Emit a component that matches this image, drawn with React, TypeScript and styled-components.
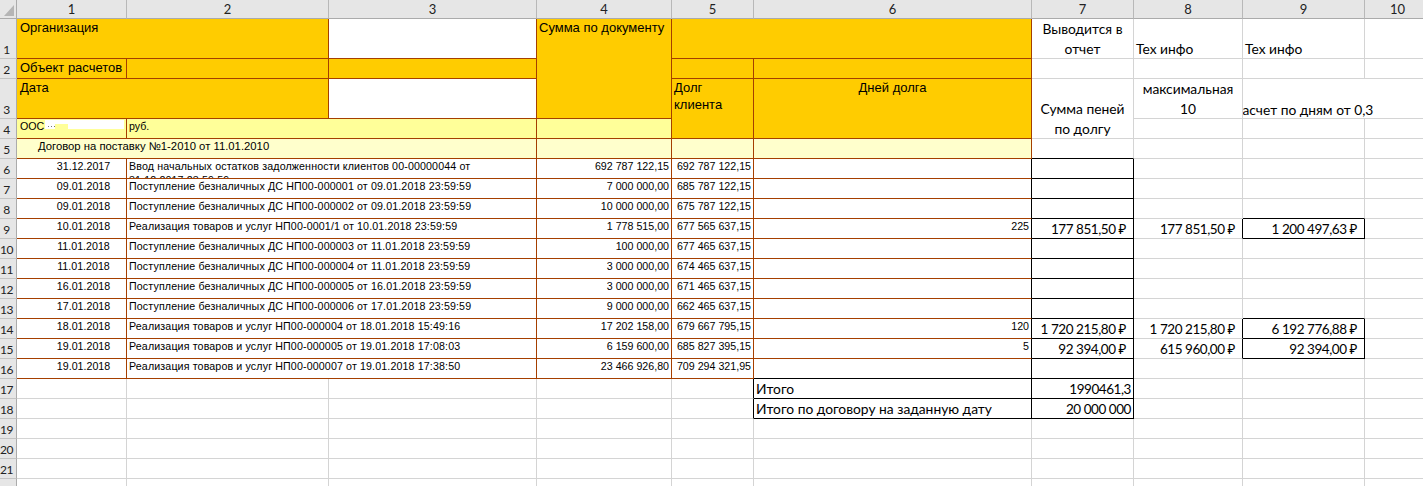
import React from 'react';
import styled, { createGlobalStyle } from 'styled-components';

const BROWN = '#a53f00';
const BLACK = '#000000';
const GRID = '#d4d4d4';
const ORANGE = '#ffcc00';
const YELLOW = '#ffff99';
const PALE = '#ffffcc';

const COLS = [110, 202, 208, 135, 82, 278, 102, 109, 122, 66];
const ROWS = [40, 20, 40, ...Array(19).fill(20)];

type Kind = 'head' | 'data' | 'doc' | 'title' | 'calc' | 'num' | 'money';

const KINDS: Record<Kind, { font: string; size: number; line: number; spacing: number; right: number }> = {
  head: { font: '"Liberation Sans", Arial, sans-serif', size: 13, line: 17, spacing: 0, right: 2 },
  data: { font: '"Liberation Sans", Arial, sans-serif', size: 10.67, line: 14, spacing: 0, right: 2 },
  doc: { font: '"Liberation Sans", Arial, sans-serif', size: 10.67, line: 14, spacing: 0.13, right: 46 },
  title: { font: '"Liberation Sans", Arial, sans-serif', size: 11.3, line: 14, spacing: 0, right: 2 },
  calc: { font: 'Lato, "Noto Sans", sans-serif', size: 13.8, line: 20, spacing: 0, right: 2 },
  num: { font: 'Lato, "Noto Sans", sans-serif', size: 13.5, line: 20, spacing: -0.45, right: 2 },
  money: { font: 'Lato, "Noto Sans", sans-serif', size: 13.5, line: 20, spacing: -0.45, right: 7 },
};

const GlobalStyle = createGlobalStyle`
  html, body { margin: 0; padding: 0; background: #fff; overflow: hidden; }
`;

const Sheet = styled.div`
  display: grid;
  grid-template-columns: 17px ${COLS.map(c => `${c}px`).join(' ')};
  grid-template-rows: 19px ${ROWS.map(r => `${r}px`).join(' ')};
  width: 1423px;
  height: 486px;
  overflow: hidden;
  font-family: Lato, "Noto Sans", sans-serif;
  color: #000;
`;

const Corner = styled.div`
  display: flex;
  align-items: flex-end;
  justify-content: flex-end;
  padding: 0 2px 2px 0;
  box-sizing: border-box;
  background: #e6e6e6;
  border-right: 1px solid #ababab;
  border-bottom: 1px solid #ababab;
`;

const CornerMark = styled.div`
  width: 10px;
  height: 11px;
  background: #b5b5b5;
  clip-path: polygon(100% 0, 100% 100%, 0 100%);
`;

const ColHead = styled.div`
  display: flex;
  align-items: center;
  justify-content: center;
  box-sizing: border-box;
  background: #e6e6e6;
  border-right: 1px solid #b8b8b8;
  border-bottom: 1px solid #ababab;
  font-size: 13px;
  color: #222;
`;

const RowHead = styled.div<{ $row: number }>`
  grid-column: 1;
  grid-row: ${p => p.$row + 1};
  display: flex;
  align-items: flex-end;
  justify-content: center;
  box-sizing: border-box;
  padding-right: 3px;
  background: #e6e6e6;
  border-right: 1px solid #ababab;
  border-bottom: 1px solid #c4c4c4;
  font-size: 12px;
  letter-spacing: -0.5px;
  line-height: 16px;
  color: #222;
  overflow: hidden;
`;

type Spec = {
  c: number;
  r: number;
  cs?: number;
  rs?: number;
  bg?: string;
  br?: string;
  bb?: string;
  kind?: Kind;
  align?: 'left' | 'center' | 'right';
  valign?: 'top' | 'middle' | 'bottom';
  indent?: number;
  text?: React.ReactNode;
};

const Cell = styled.div<{
  $c: number;
  $r: number;
  $cs: number;
  $rs: number;
  $bg: string;
  $br: string;
  $bb: string;
  $kind: Kind;
  $align: string;
  $valign: string;
  $indent: number;
}>`
  grid-column: ${p => p.$c + 1} / span ${p => p.$cs};
  grid-row: ${p => p.$r + 1} / span ${p => p.$rs};
  display: flex;
  flex-direction: column;
  justify-content: ${p => (p.$valign === 'top' ? 'flex-start' : p.$valign === 'bottom' ? 'flex-end' : 'center')};
  box-sizing: border-box;
  min-width: 0;
  overflow: hidden;
  background: ${p => p.$bg};
  border-right: 1px solid ${p => p.$br};
  border-bottom: 1px solid ${p => p.$bb};
  text-align: ${p => p.$align};
  padding: 0 ${p => KINDS[p.$kind].right}px 0 ${p => 2 + p.$indent}px;
  font-family: ${p => KINDS[p.$kind].font};
  font-size: ${p => KINDS[p.$kind].size}px;
  line-height: ${p => KINDS[p.$kind].line}px;
  letter-spacing: ${p => KINDS[p.$kind].spacing}px;
`;

// Lato sits a pixel higher in its line than the sheet's font did
const CalcText = styled.div`
  margin-bottom: -1px;
`;

// text of a centred cell that runs over its left edge and on into the next empty column
const Overflow = styled.div<{ $width: number }>`
  display: flex;
  justify-content: center;
  width: ${p => p.$width}px;
  margin-bottom: -2px;
  white-space: nowrap;
`;

const Owner = styled.div`
  display: flex;
  align-items: center;
  white-space: nowrap;
`;

// the name is painted out in the source picture, with a few specks left under the notch
const Blot = styled.span`
  display: inline-block;
  width: 80px;
  height: 9px;
  margin: -3px 0 0 1px;
  background:
    repeating-linear-gradient(90deg, #777 0 1px, transparent 1px 3px) 3px 6px / 7px 1px no-repeat,
    linear-gradient(${YELLOW}, ${YELLOW}) 10px 4px / 13px 5px no-repeat,
    #fff;
`;

const specs: Spec[] = [
  { c: 1, r: 1, cs: 2, bg: ORANGE, kind: 'head', indent: 1, text: 'Организация' },
  { c: 3, r: 1 },
  { c: 4, r: 1, rs: 3, bg: ORANGE, kind: 'head', text: 'Сумма по документу' },
  { c: 5, r: 1, cs: 2, bg: ORANGE },
  { c: 1, r: 2, bg: ORANGE, kind: 'head', indent: 1, text: 'Объект расчетов' },
  { c: 2, r: 2, bg: ORANGE },
  { c: 3, r: 2, bg: ORANGE },
  { c: 5, r: 2, bg: ORANGE },
  { c: 6, r: 2, bg: ORANGE },
  { c: 1, r: 3, cs: 2, bg: ORANGE, kind: 'head', indent: 1, text: 'Дата' },
  { c: 3, r: 3 },
  { c: 5, r: 3, rs: 2, bg: ORANGE, kind: 'head', text: <>Долг<br />клиента</> },
  { c: 6, r: 3, rs: 2, bg: ORANGE, kind: 'head', align: 'center', text: 'Дней долга' },
  {
    c: 1,
    r: 4,
    bg: YELLOW,
    indent: 1,
    text: (
      <Owner>
        ООС<Blot />
      </Owner>
    ),
  },
  { c: 2, r: 4, cs: 2, bg: YELLOW, text: 'руб.' },
  { c: 4, r: 4, bg: YELLOW },
  { c: 1, r: 5, cs: 3, bg: PALE, kind: 'title', indent: 19, text: 'Договор на поставку №1-2010 от 11.01.2010' },
  { c: 4, r: 5, bg: PALE },
  { c: 5, r: 5, bg: PALE },
  { c: 6, r: 5, bg: PALE },
];

const ledger: [string, string, string, string, string][] = [
  ['31.12.2017', 'Ввод начальных остатков задолженности клиентов 00-00000044 от 31.12.2017 23:59:59', '692 787 122,15', '692 787 122,15', ''],
  ['09.01.2018', 'Поступление безналичных ДС НП00-000001 от 09.01.2018 23:59:59', '7 000 000,00', '685 787 122,15', ''],
  ['09.01.2018', 'Поступление безналичных ДС НП00-000002 от 09.01.2018 23:59:59', '10 000 000,00', '675 787 122,15', ''],
  ['10.01.2018', 'Реализация товаров и услуг НП00-0001/1 от 10.01.2018 23:59:59', '1 778 515,00', '677 565 637,15', '225'],
  ['11.01.2018', 'Поступление безналичных ДС НП00-000003 от 11.01.2018 23:59:59', '100 000,00', '677 465 637,15', ''],
  ['11.01.2018', 'Поступление безналичных ДС НП00-000004 от 11.01.2018 23:59:59', '3 000 000,00', '674 465 637,15', ''],
  ['16.01.2018', 'Поступление безналичных ДС НП00-000005 от 16.01.2018 23:59:59', '3 000 000,00', '671 465 637,15', ''],
  ['17.01.2018', 'Поступление безналичных ДС НП00-000006 от 17.01.2018 23:59:59', '9 000 000,00', '662 465 637,15', ''],
  ['18.01.2018', 'Реализация товаров и услуг НП00-000004 от 18.01.2018 15:49:16', '17 202 158,00', '679 667 795,15', '120'],
  ['19.01.2018', 'Реализация товаров и услуг НП00-000005 от 19.01.2018 17:08:03', '6 159 600,00', '685 827 395,15', '5'],
  ['19.01.2018', 'Реализация товаров и услуг НП00-000007 от 19.01.2018 17:38:50', '23 466 926,80', '709 294 321,95', ''],
];

ledger.forEach(([date, doc, sum, debt, days], i) => {
  const r = 6 + i;
  specs.push(
    { r, c: 1, align: 'center', indent: 24, text: date },
    { r, c: 2, cs: 2, kind: 'doc', text: doc },
    { r, c: 4, align: 'right', text: sum },
    { r, c: 5, align: 'right', text: debt },
    { r, c: 6, align: 'right', br: BLACK, bb: r === 16 ? BLACK : BROWN, text: days },
  );
});

// everything outside the 1C report is plain sheet cells, with hand-drawn black frames
const calc = (c: number, r: number, text: string, framed = true, extra: Partial<Spec> = {}): Spec => ({
  c,
  r,
  kind: text.includes('₽') ? 'money' : 'num',
  align: 'right',
  valign: 'bottom',
  br: framed ? BLACK : GRID,
  bb: framed ? BLACK : GRID,
  text: text && <CalcText>{text}</CalcText>,
  ...extra,
});

const words: Partial<Spec> = { kind: 'calc', align: 'left' };

specs.push(
  calc(7, 1, 'Выводится в отчет', false, { ...words, align: 'center', valign: 'middle' }),
  calc(8, 1, 'Тех инфо', false, words),
  calc(9, 1, 'Тех инфо', false, words),
  calc(7, 3, 'Сумма пеней по долгу', false, { ...words, rs: 2, align: 'center' }),
  calc(8, 3, 'максимальная 10', false, { ...words, align: 'center', valign: 'middle' }),
  calc(9, 3, '', false, { ...words, cs: 2, text: <Overflow $width={118}>расчет по дням от 0,3</Overflow> }),
  calc(7, 6, ''),
  calc(7, 7, ''),
  calc(7, 8, ''),
  calc(7, 9, '177 851,50 ₽'),
  calc(8, 9, '177 851,50 ₽', false, { br: BLACK }),
  calc(9, 9, '1 200 497,63 ₽'),
  calc(7, 10, ''),
  calc(7, 11, ''),
  calc(7, 12, ''),
  calc(7, 13, ''),
  calc(7, 14, '1 720 215,80 ₽'),
  calc(8, 14, '1 720 215,80 ₽', false, { br: BLACK }),
  calc(9, 14, '6 192 776,88 ₽'),
  calc(7, 15, '92 394,00 ₽'),
  calc(8, 15, '615 960,00 ₽', false, { br: BLACK }),
  calc(9, 15, '92 394,00 ₽'),
  calc(7, 16, ''),
  calc(6, 17, 'Итого', true, words),
  calc(7, 17, '1990461,3'),
  calc(6, 18, 'Итого по договору на заданную дату', true, words),
  calc(7, 18, '20 000 000'),
  calc(5, 17, '', false, { br: BLACK }),
  calc(5, 18, '', false, { br: BLACK }),
  calc(7, 5, '', false, { bb: BLACK }),
  calc(9, 8, '', false, { bb: BLACK }),
  calc(9, 13, '', false, { bb: BLACK }),
);

// fill whatever no spec covers, so every grid line of the sheet gets drawn
const taken = new Set<string>();
specs.forEach(s => {
  for (let r = s.r; r < s.r + (s.rs ?? 1); r++) {
    for (let c = s.c; c < s.c + (s.cs ?? 1); c++) taken.add(`${c}:${r}`);
  }
});
ROWS.forEach((_, ri) => {
  COLS.forEach((_, ci) => {
    const c = ci + 1;
    const r = ri + 1;
    if (!taken.has(`${c}:${r}`)) specs.push({ c, r, br: GRID, bb: GRID });
  });
});

const App: React.FC = () => (
  <>
    <GlobalStyle />
    <Sheet>
      <Corner>
        <CornerMark />
      </Corner>
      {COLS.map((_, i) => (
        <ColHead key={i}>{i + 1}</ColHead>
      ))}
      {ROWS.map((_, i) => (
        <RowHead key={i} $row={i + 1}>
          {i + 1}
        </RowHead>
      ))}
      {specs.map(s => (
        <Cell
          key={`${s.c}:${s.r}`}
          $c={s.c}
          $r={s.r}
          $cs={s.cs ?? 1}
          $rs={s.rs ?? 1}
          $bg={s.bg ?? '#fff'}
          $br={s.br ?? BROWN}
          $bb={s.bb ?? BROWN}
          $kind={s.kind ?? 'data'}
          $align={s.align ?? 'left'}
          $valign={s.valign ?? 'top'}
          $indent={s.indent ?? 0}
        >
          {s.text}
        </Cell>
      ))}
    </Sheet>
  </>
);

export default App;
